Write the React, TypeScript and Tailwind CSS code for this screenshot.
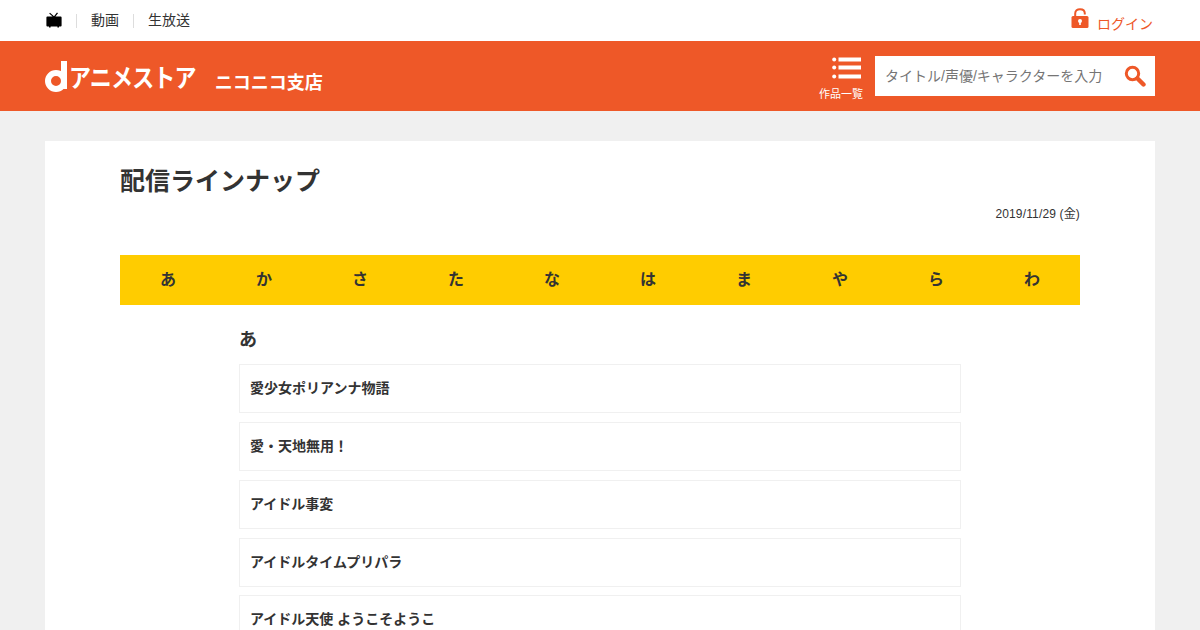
const FONT = "font-['Liberation_Sans','Noto_Sans_CJK_JP',sans-serif]"

const kana = ["あ", "か", "さ", "た", "な", "は", "ま", "や", "ら", "わ"]
const titles = ["愛少女ポリアンナ物語", "愛・天地無用！", "アイドル事変", "アイドルタイムプリパラ", "アイドル天使 ようこそようこ"]

function TvIcon() {
  return (
    <svg width="16" height="16" viewBox="0 0 16 16" fill="#000" className="mb-[2px]">
      <path d="M4 .8 L8 4.2 L11 .4 L12 1.2 L9.4 4.6 H14.6 Q15.6 4.6 15.6 5.6 V13.4 Q15.6 14.4 14.6 14.4 H13 V15.4 H11.4 V14.4 H4.6 V15.4 H3 V14.4 H1.4 Q.4 14.4 .4 13.4 V5.6 Q.4 4.6 1.4 4.6 H6.6 L3.2 1.6 Z" />
    </svg>
  )
}

function LockIcon() {
  return (
    <svg width="18" height="20" viewBox="0 0 18 20">
      <path d="M4.2 9 V5.4 C4.2 2.8 6.2 1.2 9 1.2 C11.8 1.2 13.8 2.8 13.8 5.4 V6.4" fill="none" stroke="#ee5828" strokeWidth="2" />
      <rect x="0.5" y="8" width="17" height="12" rx="1.5" fill="#ee5828" />
      <circle cx="9" cy="13" r="2" fill="#fff" />
      <rect x="8.2" y="13.5" width="1.6" height="3.5" fill="#fff" />
    </svg>
  )
}

function ListIcon() {
  return (
    <svg width="29" height="22" viewBox="0 0 29 22" fill="#fff">
      <circle cx="2.2" cy="2.4" r="2" />
      <circle cx="2.2" cy="10.6" r="2" />
      <circle cx="2.2" cy="19.4" r="2" />
      <rect x="6.5" y="0.5" width="22.5" height="4" />
      <rect x="6.5" y="8.5" width="22.5" height="4" />
      <rect x="6.5" y="17.5" width="22.5" height="4" />
    </svg>
  )
}

function SearchIcon() {
  return (
    <svg width="22" height="22" viewBox="0 0 22 22" fill="none" stroke="#ee5828">
      <circle cx="8.5" cy="8.5" r="6.2" strokeWidth="3" />
      <path d="M13.5 13.5 L19.5 19.5" strokeWidth="4.4" strokeLinecap="round" />
    </svg>
  )
}

function Logo() {
  return (
    <div className="flex items-end text-white font-bold mt-[2px]">
      <svg width="23" height="31" viewBox="0 0 23 31" className="mb-[1px]">
        <circle cx="11" cy="20" r="8" fill="none" stroke="#fff" strokeWidth="6" />
        <rect x="16" y="0" width="6" height="28" rx="0" fill="#fff" />
      </svg>
      <span className="ml-[1px] text-[22px] leading-[28px] tracking-[-0.8px] scale-y-[1.15]">アニメストア</span>
      <span className="ml-[19px] text-[18px] leading-[20px]">ニコニコ支店</span>
    </div>
  )
}

export default function App() {
  return (
    <main className={`h-[630px] overflow-hidden bg-[#f0f0f0] text-[#333] ${FONT}`}>
      {/* top bar */}
      <div className="h-[41px] bg-white flex items-center justify-between pl-[46px] pr-[47px]">
        <div className="flex items-center text-[14px]">
          <TvIcon />
          <span className="ml-[14px] h-[14px] border-l border-[#ddd]"></span>
          <span className="ml-[14px]">動画</span>
          <span className="ml-[14px] h-[14px] border-l border-[#ddd]"></span>
          <span className="ml-[14px]">生放送</span>
        </div>
        <div className="flex items-center text-[14px] text-[#ee5828] mb-[2px]">
          <span className="mb-[4px]"><LockIcon /></span>
          <span className="ml-[8px] mt-[10px]">ログイン</span>
        </div>
      </div>

      {/* orange header */}
      <header className="h-[70px] bg-[#ee5828] flex items-center justify-between pl-[45px] pr-[45px]">
        <Logo />
        <div className="flex items-center">
          <div className="flex flex-col items-center text-white text-[11px] leading-[14px] mt-[6px]">
            <span className="self-end mr-[2px]"><ListIcon /></span>
            <span className="mt-[8px]">作品一覧</span>
          </div>
          <div className="ml-[12px] w-[280px] h-[40px] bg-white flex items-center justify-between pl-[10px] pr-[9px]">
            <span className="text-[14px] text-[#757575]">タイトル/声優/キャラクターを入力</span>
            <SearchIcon />
          </div>
        </div>
      </header>

      {/* content */}
      <div className="pt-[30px] px-[45px]">
        <section className="bg-white px-[75px] pt-[22px] h-[600px]">
          <h1 className="text-[25px] leading-[36px] font-bold">配信ラインナップ</h1>
          <p className="mt-[6px] text-right text-[12px] leading-[18px] tracking-[0.15px]">2019/11/29 (金)</p>
          <nav className="mt-[32px] h-[50px] bg-[#ffcc00] grid grid-cols-10">
            {kana.map((k) => (
              <div key={k} className="flex items-center justify-center text-[16px] font-bold">{k}</div>
            ))}
          </nav>
          <div className="mt-[22px] px-[119px]">
            <h2 className="text-[18px] leading-[26px] font-bold">あ</h2>
            <ul className="mt-[11.4px] flex flex-col gap-[8.75px]">
              {titles.map((t) => (
                <li key={t} className="h-[49px] border border-[#f0f0f0] pl-[10px] flex items-center text-[14px] font-bold">{t}</li>
              ))}
            </ul>
          </div>
        </section>
      </div>
    </main>
  )
}
